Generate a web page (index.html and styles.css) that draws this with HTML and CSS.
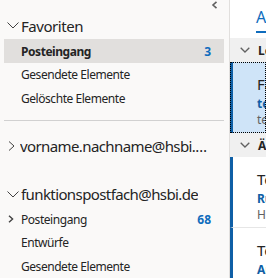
FILE: index.html
```html
<!DOCTYPE html>
<html lang="de">
<head>
<meta charset="utf-8">
<link rel="stylesheet" href="styles.css">
</head>
<body>
<div class="app">
  <aside class="nav">
    <div class="nav-top">
      <svg class="collapse" width="7" height="8" viewBox="0 0 7 8"><polyline points="5.5,0.8 2,4 5.5,7.2" fill="none" stroke="#616161" stroke-width="1.6"/></svg>
    </div>
    <div class="group-head">
      <svg class="chev-down" width="12" height="7" viewBox="0 0 12 7"><polyline points="0.5,0.5 6,6 11.5,0.5" fill="none" stroke="#424242" stroke-width="1"/></svg>
      <span>Favoriten</span>
    </div>
    <div class="row selected"><span class="label bold">Posteingang</span><span class="count">3</span></div>
    <div class="row"><span class="label">Gesendete Elemente</span></div>
    <div class="row"><span class="label">Gelöschte Elemente</span></div>
    <div class="sep"></div>
    <div class="account first">
      <svg class="chev-right" width="8" height="10" viewBox="0 0 8 10"><polyline points="1,0.5 6,5 1,9.5" fill="none" stroke="#424242" stroke-width="1"/></svg>
      <span class="acct-name">vorname.nachname@hsbi.de</span>
    </div>
    <div class="account second">
      <svg class="chev-down" width="12" height="7" viewBox="0 0 12 7"><polyline points="0.5,0.5 6,6 11.5,0.5" fill="none" stroke="#424242" stroke-width="1"/></svg>
      <span class="acct-name">funktionspostfach@hsbi.de</span>
    </div>
    <div class="row sub">
      <svg class="chev-small" width="6" height="8" viewBox="0 0 6 8"><polyline points="1,0.7 4.6,4 1,7.3" fill="none" stroke="#424242" stroke-width="1.4"/></svg>
      <span class="label">Posteingang</span><span class="count">68</span>
    </div>
    <div class="row"><span class="label">Entwürfe</span></div>
    <div class="row"><span class="label">Gesendete Elemente</span></div>
  </aside>
  <main class="list">
    <div class="tabs"><span class="tab active">Alle</span></div>
    <div class="ghead">
      <svg class="gchev" width="10" height="6" viewBox="0 0 10 6"><polyline points="0.7,0.7 5,5 9.3,0.7" fill="none" stroke="#616161" stroke-width="1.3"/></svg>
      <span>Letzte Woche</span>
    </div>
    <div class="msg unread selected">
      <div class="from">Fachbereich</div>
      <div class="subject">termin</div>
      <div class="preview">text</div>
    </div>
    <div class="ghead">
      <svg class="gchev" width="10" height="6" viewBox="0 0 10 6"><polyline points="0.7,0.7 5,5 9.3,0.7" fill="none" stroke="#616161" stroke-width="1.3"/></svg>
      <span>Älter</span>
    </div>
    <div class="msg unread">
      <div class="from">Team</div>
      <div class="subject">Rundmail</div>
      <div class="preview">Hallo</div>
    </div>
    <div class="msg unread">
      <div class="from">Team</div>
      <div class="subject">Anfrage</div>
      <div class="preview">Hallo</div>
    </div>
  </main>
</div>
</body>
</html>
```
FILE: styles.css
```css
* { box-sizing: border-box; }
html, body { margin: 0; padding: 0; }
body {
  width: 266px;
  height: 278px;
  overflow: hidden;
  font-family: "Noto Sans", "Open Sans", sans-serif;
  color: #242424;
  background: #ffffff;
}
.app {
  display: flex;
  height: 278px;
}
.nav {
  width: 230px;
  flex: none;
  background: #faf9f8;
  border-right: 1px solid #e1dfdd;
  display: flex;
  flex-direction: column;
  overflow: hidden;
}
.nav-top {
  height: 12px;
  display: flex;
  justify-content: flex-end;
  padding: 1px 11px 0 0;
}
.collapse { display: block; }
.group-head {
  height: 28px;
  display: flex;
  align-items: center;
  padding-left: 7px;
  font-size: 15px;
  letter-spacing: -0.45px;
  gap: 2px;
}
.chev-down { flex: none; }
.row {
  height: 24px;
  margin: 0 5px 0 4px;
  padding: 0 13px 0 17px;
  display: flex;
  align-items: center;
  font-size: 12px;
  letter-spacing: -0.45px;
}
.row.selected { background: #e1dfdd; }
.row .label { flex: 1; white-space: nowrap; }
.bold { font-weight: 700; }
.count {
  color: #0f6cbd;
  font-weight: 700;
  font-size: 12px;
  letter-spacing: 0;
}
.row.sub { padding-left: 4px; }
.chev-small { margin-right: 7px; flex: none; }
.sep {
  height: 1px;
  margin: 10px 5px 0 4px;
  background: #d1d1d1;
}
.account {
  height: 26px;
  display: flex;
  align-items: center;
  font-size: 15px;
  letter-spacing: -0.6px;
  padding: 0 21px 0 7px;
  white-space: nowrap;
}
.account.first { margin-top: 12px; }
.account.second { margin-top: 23px; }
.chev-right { margin: 0 4px 0 1px; flex: none; }
.acct-name {
  overflow: hidden;
  text-overflow: ellipsis;
  min-width: 0;
  margin-left: 2px;
}
.account.first .acct-name { margin-left: 0; }
.list {
  flex: 1;
  min-width: 0;
  overflow: hidden;
  background: #ffffff;
}
.tabs {
  height: 38px;
  padding-left: 26px;
  display: flex;
  align-items: flex-end;
}
.tab {
  font-size: 16px;
  color: #0f6cbd;
  line-height: 20px;
  padding-bottom: 4px;
  margin-bottom: 5px;
  border-bottom: 2px solid #0f6cbd;
  white-space: nowrap;
}
.ghead {
  height: 24px;
  background: #f0f0f0;
  display: flex;
  align-items: center;
  padding-left: 10px;
  font-size: 12px;
  font-weight: 700;
  white-space: nowrap;
}
.gchev { margin-right: 8px; flex: none; }
.msg {
  height: 71px;
  padding: 12px 0 0 24px;
  border-left: 3px solid #0f5fa6;
  white-space: nowrap;
  border-bottom: 1px solid #e6e6e6;
}
.msg.selected {
  background: #cfe4f8;
  outline: 1px dotted #000000;
  outline-offset: -1px;
  height: 71px;
  border-bottom: none;
}
.from { font-size: 15px; line-height: 20px; color: #242424; }
.subject { font-size: 12px; line-height: 16px; font-weight: 700; color: #0f5fa6; margin-top: 2px; }
.preview { font-size: 12px; line-height: 16px; color: #616161; }
```
